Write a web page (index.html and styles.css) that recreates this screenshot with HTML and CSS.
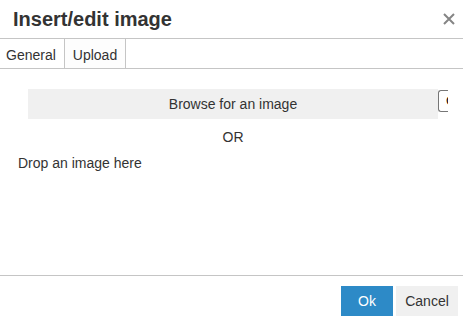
FILE: index.html
```html
<!DOCTYPE html>
<html>
<head>
<meta charset="utf-8">
<link rel="stylesheet" href="styles.css">
</head>
<body>
<div class="dialog">
  <div class="head">
    <div class="title">Insert/edit image</div>
    <svg class="close" width="12" height="12" viewBox="0 0 12 12"><path d="M1 1L11 11M11 1L1 11" stroke="#858585" stroke-width="2"/></svg>
  </div>
  <div class="tabs">
    <div class="tab">General</div>
    <div class="tab active">Upload</div>
  </div>
  <div class="body">
    <div class="browse-row">
      <div class="browse">Browse for an image</div>
      <div class="file"><span class="file-c">Choose File</span></div>
    </div>
    <div class="or">OR</div>
    <div class="drop">Drop an image here</div>
  </div>
  <div class="foot">
    <button class="btn ok">Ok</button>
    <button class="btn cancel">Cancel</button>
  </div>
</div>
</body>
</html>
```
FILE: styles.css
```css
html, body { margin: 0; padding: 0; background: #fff; }
body { font-family: "Liberation Sans", Arial, sans-serif; color: #333; width: 463px; height: 325px; overflow: hidden; }
.dialog { display: flex; flex-direction: column; height: 325px; }
.head { height: 38px; border-bottom: 1px solid #c5c5c5; display: flex; align-items: center; justify-content: space-between; padding: 0 8px 0 13px; }
.title { font-size: 20px; font-weight: bold; line-height: 24px; color: #333; }
.tabs { display: flex; height: 29px; border-bottom: 1px solid #c5c5c5; }
.tab { font-size: 14px; line-height: 16px; padding: 8px 8px 5px 6px; border-right: 1px solid #c5c5c5; color: #333; }
.tab.active { background: #fdfdfd; padding-left: 8px; }
.body { flex: 1; padding-top: 20px; }
.browse-row { display: flex; margin-left: 28px; height: 30px; }
.browse { width: 410px; height: 30px; background: #f0f0f0; font-size: 14px; line-height: 30px; text-align: center; color: #333; }
.file { width: 10px; height: 22px; margin-top: 1px; border: 1px solid #767676; border-right: none; border-radius: 3px 0 0 3px; background: #fff; font-size: 13px; line-height: 20px; padding-left: 7px; box-sizing: border-box; color: #000; overflow: hidden; white-space: nowrap; }
.file-c { display: inline-block; }
.or { text-align: center; font-size: 14px; line-height: 16px; margin-top: 10px; width: 466px; }
.drop { font-size: 14px; line-height: 16px; margin-top: 10px; margin-left: 18px; }
.foot { border-top: 1px solid #c5c5c5; height: 50px; display: flex; justify-content: flex-end; align-items: flex-start; padding: 10px 5px 0 0; box-sizing: border-box; gap: 3px; }
.btn { font-family: "Liberation Sans", Arial, sans-serif; font-size: 14px; height: 30px; border: none; padding: 0; margin: 0; }
.ok { width: 52px; background: #2d8ac7; color: #fff; }
.cancel { width: 62px; background: #f0f0f0; color: #333; }
```
